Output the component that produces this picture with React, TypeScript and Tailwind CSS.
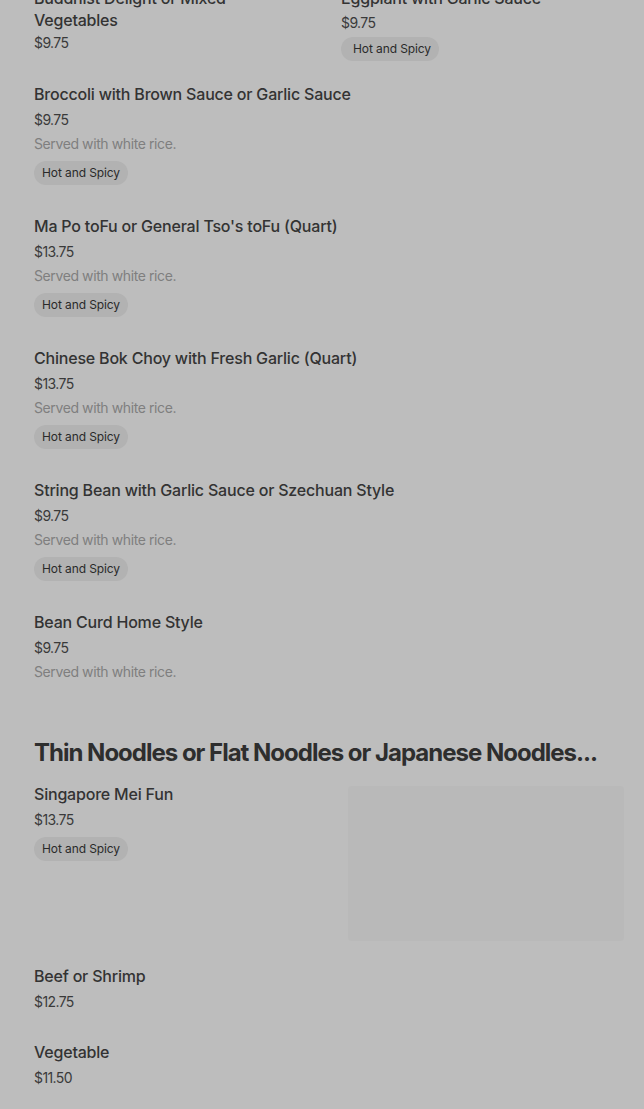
import React from "react";

const Pill = () => (
  <div className="mt-[7px] self-start h-6 flex items-center rounded-full bg-[#b2b2b2] text-[12px] text-[#2a2a2a] px-2 tracking-[-0.1px]">
    Hot and Spicy
  </div>
);

type ItemProps = { title: string; price: string; desc?: boolean; pill?: boolean };

const Item = ({ title, price, desc, pill }: ItemProps) => (
  <div className="flex flex-col">
    <div className="text-[16px] leading-[22px] font-medium text-[#333333] tracking-[-0.2px]">{title}</div>
    <div className="mt-[5px] text-[14px] leading-[20px] text-[#3a3a3a] tracking-[-0.6px]">{price}</div>
    {desc && (
      <div className="mt-1 text-[14px] leading-[20px] text-[#7f7f7f] tracking-[-0.4px]">Served with white rice.</div>
    )}
    {pill && <Pill />}
  </div>
);

export default function App() {
  return (
    <div
      className="w-[644px] h-[1109px] overflow-hidden bg-[#bdbdbd]"
      style={{ fontFamily: "Inter, 'Noto Sans', sans-serif" }}
    >
      <div className="pl-[34px] pr-[20px] -mt-[13px]">
        <div className="grid grid-cols-2 gap-x-[16px]">
          <div className="flex flex-col">
            <div className="text-[16px] leading-[22px] font-medium text-[#333333] tracking-[-0.2px] w-[260px]">
              Buddhist Delight or Mixed Vegetables
            </div>
            <div className="mt-[2px] text-[14px] leading-[20px] text-[#3a3a3a] tracking-[-0.6px]">$9.75</div>
          </div>
          <div className="flex flex-col ml-[4px]">
            <div className="text-[16px] leading-[22px] font-medium text-[#333333] tracking-[-0.2px]">
              Eggplant with Garlic Sauce
            </div>
            <div className="mt-[4px] text-[14px] leading-[20px] text-[#3a3a3a] tracking-[-0.6px]">$9.75</div>
            <div className="mt-[4px] self-start h-6 flex items-center rounded-full bg-[#b2b2b2] text-[12px] text-[#2a2a2a] pl-3 pr-[8px] tracking-[-0.1px]">
              Hot and Spicy
            </div>
          </div>
        </div>

        <div className="mt-[22px] flex flex-col gap-[30px]">
          <Item title="Broccoli with Brown Sauce or Garlic Sauce" price="$9.75" desc pill />
          <Item title="Ma Po toFu or General Tso's toFu (Quart)" price="$13.75" desc pill />
          <Item title="Chinese Bok Choy with Fresh Garlic (Quart)" price="$13.75" desc pill />
          <Item title="String Bean with Garlic Sauce or Szechuan Style" price="$9.75" desc pill />
          <Item title="Bean Curd Home Style" price="$9.75" desc />
        </div>

        <h2 className="mt-[55px] text-[24px] leading-[32px] font-bold tracking-[-1px] text-[#2e2e2e] whitespace-nowrap">
          Thin Noodles or Flat Noodles or Japanese Noodles...
        </h2>

        <div className="mt-[14px] flex">
          <div className="flex-1">
            <Item title="Singapore Mei Fun" price="$13.75" pill />
          </div>
          <div className="w-[276px] h-[155px] mt-[3px] bg-[#b9b9b9] rounded-sm" />
        </div>

        <div className="mt-[24px] flex flex-col gap-[29px]">
          <Item title="Beef or Shrimp" price="$12.75" />
          <Item title="Vegetable" price="$11.50" />
        </div>
      </div>
    </div>
  );
}
